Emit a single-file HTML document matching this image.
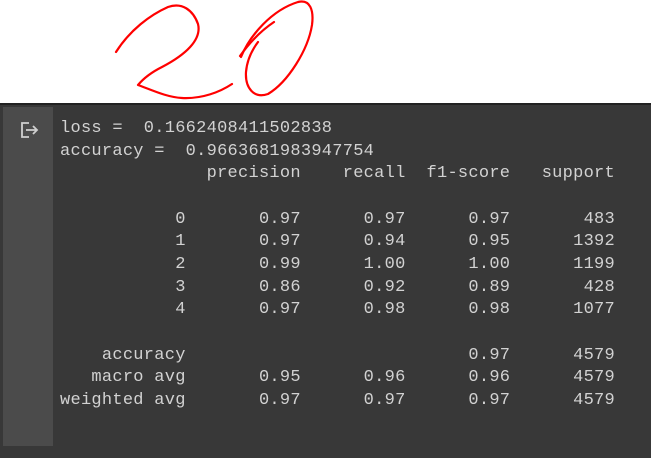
<!DOCTYPE html>
<html><head><meta charset="utf-8"><style>
body{margin:0;width:651px;height:456px;background:#fff;position:relative;overflow:hidden}
#out{position:absolute;left:0;top:103px;width:651px;height:353px;background:#383838;border-top:2px solid #222}
#g{position:absolute;left:3px;top:2px;width:50px;height:339px;background:#4b4b4b}
pre{position:absolute;left:60px;top:13px;margin:0;font-family:"Liberation Mono",monospace;font-size:17px;letter-spacing:0.27px;line-height:22.65px;color:#d2d2d2}
</style></head><body>
<svg width="651" height="103" style="position:absolute;left:0;top:0" fill="none" stroke="#f00" stroke-width="2.2" stroke-linecap="round" stroke-linejoin="round">
<path d="M116,52 C130,30 150,15 168,7 C182,2 193,10 198,24 C202,40 185,55 162,67 C150,73 143,79 138,85 C152,90 166,97 182,98 C202,99 220,92 232,84"/>
<path d="M240,56 C250,42 262,30 274,22"/>
<path d="M241,57 C250,35 272,10 298,2 C310,-1 314,10 312,25 C308,50 288,82 268,94 C254,99 245,88 246,72 C247,60 252,50 258,42"/>
</svg>
<div id="out"><div id="g"></div>
<svg style="position:absolute;left:20px;top:16px" width="20" height="18" fill="none" stroke="#cfcfcf" stroke-width="1.8"><path d="M9,2 H2 V16 H9"/><path d="M6,9 H17 M13,5 L17,9 L13,13"/></svg>
<pre>loss =  0.1662408411502838
accuracy =  0.9663681983947754
              precision    recall  f1-score   support

           0       0.97      0.97      0.97       483
           1       0.97      0.94      0.95      1392
           2       0.99      1.00      1.00      1199
           3       0.86      0.92      0.89       428
           4       0.97      0.98      0.98      1077

    accuracy                           0.97      4579
   macro avg       0.95      0.96      0.96      4579
weighted avg       0.97      0.97      0.97      4579</pre>
</div>
</body></html>
